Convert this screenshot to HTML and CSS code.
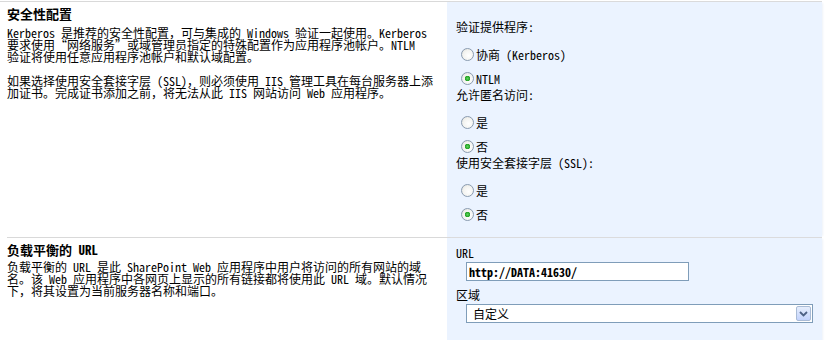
FILE: index.html
```html
<!DOCTYPE html>
<html lang="zh-CN">
<head>
<meta charset="utf-8">
<title>安全性配置</title>
<link rel="stylesheet" href="styles.css">
</head>
<body>
<div class="page">
  <section class="row row-first">
    <div class="desc">
      <h3 class="title">安全性配置</h3>
      <p class="text text-auth">Kerberos 是推荐的安全性配置，可与集成的 Windows 验证一起使用。Kerberos 要求使用“网络服务”或域管理员指定的特殊配置作为应用程序池帐户。NTLM 验证将使用任意应用程序池帐户和默认域配置。</p>
      <p class="text">如果选择使用安全套接字层 (SSL)，则必须使用 IIS 管理工具在每台服务器上添加证书。完成证书添加之前，将无法从此 IIS 网站访问 Web 应用程序。</p>
    </div>
    <div class="controls">
      <div class="group">
        <div class="label">验证提供程序:</div>
        <label class="option"><input type="radio" name="auth" class="radio"><span>协商 (Kerberos)</span></label>
        <label class="option"><input type="radio" name="auth" class="radio" checked><span>NTLM</span></label>
      </div>
      <div class="group">
        <div class="label">允许匿名访问:</div>
        <label class="option"><input type="radio" name="anon" class="radio"><span>是</span></label>
        <label class="option"><input type="radio" name="anon" class="radio" checked><span>否</span></label>
      </div>
      <div class="group">
        <div class="label">使用安全套接字层 (SSL):</div>
        <label class="option"><input type="radio" name="ssl" class="radio"><span>是</span></label>
        <label class="option"><input type="radio" name="ssl" class="radio" checked><span>否</span></label>
      </div>
    </div>
  </section>
  <section class="row row-second">
    <div class="desc">
      <h3 class="title">负载平衡的 URL</h3>
      <p class="text">负载平衡的 URL 是此 SharePoint Web 应用程序中用户将访问的所有网站的域名。该 Web 应用程序中各网页上显示的所有链接都将使用此 URL 域。默认情况下，将其设置为当前服务器名称和端口。</p>
    </div>
    <div class="controls controls-url">
      <div class="label">URL</div>
      <div class="field"><input type="text" class="textbox" value="http://DATA:41630/"></div>
      <div class="label">区域</div>
      <div class="field">
        <div class="select">
          <span class="select-value">自定义</span>
          <span class="select-btn"><svg width="9" height="6" viewBox="0 0 9 6"><path d="M1 1 L4.5 4.5 L8 1" fill="none" stroke="#4d6185" stroke-width="1.8"/></svg></span>
        </div>
      </div>
    </div>
  </section>
</div>
</body>
</html>
```

FILE: styles.css
```css
* { box-sizing: border-box; }

body {
  margin: 0;
  background: #ffffff;
  color: #000000;
  font-family: "Noto Sans Mono CJK SC", "Noto Sans CJK SC", "DejaVu Sans Mono", monospace;
  font-size: 12px;
}

.page {
  width: 822px;
  padding-top: 1px;
}

.row {
  display: grid;
  grid-template-columns: 447px 375px;
  border-top: 1px solid #d9d9d9;
}

.row-second {
  margin-left: 7px;
  grid-template-columns: 440px 375px;
}

.desc {
  padding: 4px 14px 0 7px;
  width: 447px;
}

.row-second .desc {
  padding-left: 0;
  width: 440px;
  padding-top: 4px;
}

.title {
  margin: 0;
  font-size: 13px;
  font-weight: bold;
  line-height: 16px;
}

.text {
  margin: 5px 0 0;
  line-height: 12px;
}

.text-auth {
  max-width: 422px;
}

.text + .text {
  margin-top: 12px;
}

.row-second .text {
  margin-top: 3px;
}

.controls {
  background: #ebf3ff;
  padding: 18px 9px 16px;
  box-shadow: 2px 0 2px -1px #eef2f8;
}

.group + .group {
  margin-top: 3px;
}

.label {
  line-height: 14px;
  height: 14px;
}

.option {
  display: flex;
  align-items: center;
  gap: 2px;
  height: 13px;
  line-height: 13px;
  margin-top: 11px;
  margin-left: 5px;
}

.label + .option {
  margin-top: 14px;
}

.radio {
  appearance: none;
  -webkit-appearance: none;
  margin: 0;
  width: 13px;
  height: 13px;
  border: 1px solid #8a9bb0;
  border-radius: 50%;
  background: radial-gradient(circle at 60% 60%, #ffffff 0%, #f3f3f0 55%, #dcdcd6 100%);
  flex: none;
}

.radio:checked {
  background:
    radial-gradient(circle at 50% 50%, #5fd45f 0, #22a022 2.5px, transparent 3px),
    radial-gradient(circle at 60% 60%, #ffffff 0%, #f3f3f0 55%, #dcdcd6 100%);
}

.controls-url {
  padding-top: 8px;
  padding-bottom: 20px;
}

.field {
  padding-left: 10px;
  margin: 2px 0 7px;
}

.textbox {
  display: block;
  width: 223px;
  height: 19px;
  border: 1px solid #7f9db9;
  padding: 0 2px;
  font-family: "Noto Sans Mono CJK SC", "DejaVu Sans Mono", monospace;
  font-size: 12px;
  font-weight: bold;
  color: #000;
  background: #fff;
}

.select {
  width: 347px;
  height: 19px;
  border: 1px solid #7f9db9;
  background: #fff;
  display: flex;
  align-items: center;
  justify-content: space-between;
  padding: 0 1px 0 6px;
}

.select-value {
  font-family: "Noto Sans CJK SC", sans-serif;
  font-size: 12px;
}

.select-btn {
  width: 15px;
  height: 15px;
  border: 1px solid #a9bbd6;
  border-radius: 2px;
  background: linear-gradient(#e6eefc, #c3d3fd);
  display: flex;
  align-items: center;
  justify-content: center;
}
```
